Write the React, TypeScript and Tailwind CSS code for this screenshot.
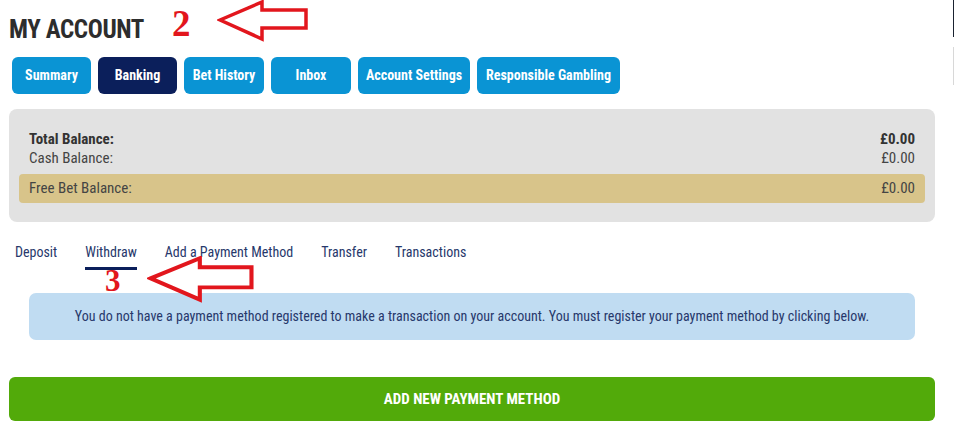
import React from "react"

const tabs = [
  { label: "Summary", w: "w-[79px]" },
  { label: "Banking", w: "w-[79px]" },
  { label: "Bet History", w: "w-[80px]" },
  { label: "Inbox", w: "w-[80px]" },
  { label: "Account Settings", w: "w-[112px]" },
  { label: "Responsible Gambling", w: "w-[143px]" },
]
const subTabs = ["Deposit", "Withdraw", "Add a Payment Method", "Transfer", "Transactions"]

const font = { fontFamily: '"Roboto Condensed", "Liberation Sans Narrow", "Arial Narrow", Roboto, sans-serif' }
const serif = { fontFamily: '"Liberation Serif", serif' }

function Arrow({ className }: { className: string }) {
  return (
    <svg className={className} viewBox="0 0 92 42" preserveAspectRatio="none" fill="white" stroke="#e2161d" strokeWidth="3.5">
      <polygon points="3,20 45,2 45,10 89,10 89,28 45,28 45,39" />
    </svg>
  )
}

export default function App() {
  return (
    <div className="relative w-[954px] h-[444px] bg-white overflow-hidden pl-[9px] pr-[19px]" style={font}>
      {/* stray edge lines */}
      <div className="absolute right-0 top-0 w-px h-[37px] bg-[#1a2230]" />
      <div className="absolute right-0 top-[47px] w-px h-[38px] bg-[#d8d8d8]" />

      {/* header */}
      <div className="relative flex items-end h-[48px] pb-[6px]">
        <h1 className="text-[25px] leading-none font-bold text-[#2d2d2d] tracking-[-0.4px]">MY ACCOUNT</h1>
        <span className="absolute left-[163px] top-[5px] text-[37px] leading-none font-bold text-[#e2161d]" style={serif}>2</span>
        <Arrow className="absolute left-[208px] top-0 w-[92px] h-[42px]" />
      </div>

      {/* main tabs */}
      <div className="flex gap-[7px] pl-[3px] mt-[9px]">
        {tabs.map((t) => (
          <button
            key={t.label}
            className={`h-[37px] ${t.w} rounded-[6px] text-[14px] font-bold text-white ${t.label === "Banking" ? "bg-[#0b1f5b]" : "bg-[#0a94d4]"}`}
          >
            {t.label}
          </button>
        ))}
      </div>

      {/* balance panel */}
      <div className="mt-[15px] h-[113px] bg-[#e2e2e2] rounded-[8px] px-[10px] pt-[21px] text-[15px] text-[#333]">
        <div className="flex justify-between px-[10px] leading-[19px] font-bold">
          <span>Total Balance:</span>
          <span>£0.00</span>
        </div>
        <div className="flex justify-between px-[10px] leading-[19px] text-[#444]">
          <span>Cash Balance:</span>
          <span>£0.00</span>
        </div>
        <div className="mt-[6px] h-[29px] flex items-center justify-between px-[10px] bg-[#d8c48a] rounded-[4px] text-[#444]">
          <span>Free Bet Balance:</span>
          <span>£0.00</span>
        </div>
      </div>

      {/* sub tabs */}
      <div className="relative flex gap-[28px] pl-[6px] mt-[21px] text-[14px] text-[#27386b]">
        {subTabs.map((t) => (
          <div key={t} className="flex flex-col">
            <span className="leading-[19px]">{t}</span>
            <span className={`mt-[5px] h-[3px] ${t === "Withdraw" ? "bg-[#0b1f5b]" : ""}`} />
          </div>
        ))}
      </div>

      {/* info box */}
      <div className="relative mx-[20px] mt-[23px] h-[47px] flex items-center justify-center bg-[#c0dcf2] rounded-[7px] text-[14px] text-[#27386b]">
        You do not have a payment method registered to make a transaction on your account. You must register your payment method by clicking below.
      </div>

      {/* annotation 3 */}
      <span className="absolute left-[105px] top-[265px] text-[31px] leading-none font-bold text-[#e2161d]" style={serif}>3</span>
      <Arrow className="absolute left-[147px] top-[256px] w-[108px] h-[47px]" />

      {/* add button */}
      <button className="mt-[37px] w-full h-[44px] rounded-[6px] bg-[#52aa0a] text-white text-[15px] font-bold uppercase">
        Add New Payment Method
      </button>
    </div>
  )
}
